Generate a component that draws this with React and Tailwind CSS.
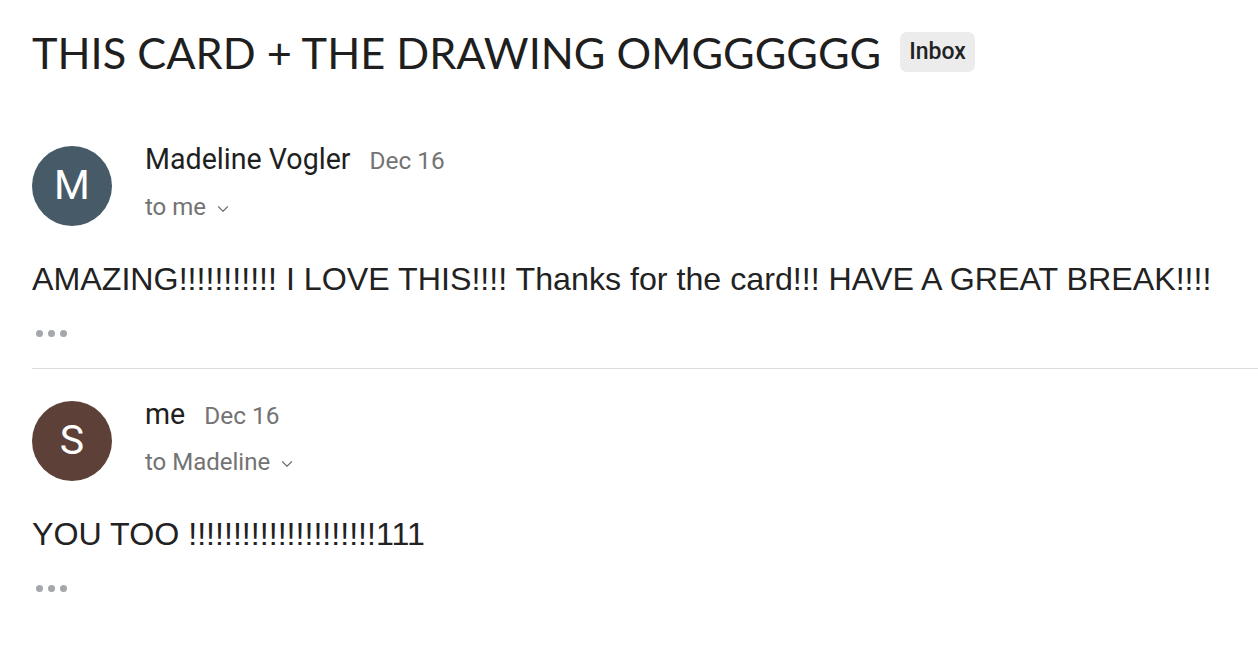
import React from 'react'
import { ChevronDown } from 'lucide-react'

const Dots = () => (
    <div className="flex items-center gap-[5px] pl-[4px] h-[7px]">
        <span className="w-[7px] h-[7px] rounded-full bg-[#a4a7ab]" />
        <span className="w-[7px] h-[7px] rounded-full bg-[#a4a7ab]" />
        <span className="w-[7px] h-[7px] rounded-full bg-[#a4a7ab]" />
    </div>
)

const Message = ({ initial, avatarColor, name, date, to, body }) => (
    <div>
        {/* Header */}
        <div className="flex items-start gap-[33px]">
            <div
                className={`w-[80px] h-[80px] shrink-0 rounded-full flex items-center justify-center text-white text-[41px] font-['Roboto',sans-serif] ${avatarColor}`}
            >
                {initial}
            </div>
            <div className="-mt-[3px] font-['Roboto',sans-serif]">
                <div className="flex items-baseline gap-[19px] leading-[32px]">
                    <span className="text-[28.6px] text-[#1f1f1f]">{name}</span>
                    <span className="text-[24.4px] text-[#737373]">{date}</span>
                </div>
                <div className="mt-[16px] flex items-center gap-[8px] leading-[28px] text-[24px] text-[#737373]">
                    <span>{to}</span>
                    <ChevronDown size={18} strokeWidth={1.6} className="mt-[3px]" />
                </div>
            </div>
        </div>

        {/* Body */}
        <p className="mt-[33px] text-[32.2px] leading-[40px] text-[#222] font-['Liberation_Sans',Arial,sans-serif] whitespace-nowrap">
            {body}
        </p>
        <div className="mt-[31px]">
            <Dots />
        </div>
    </div>
)

export default function App() {
    return (
        <div className="w-full h-[661px] overflow-hidden bg-white pl-[32px]">
            {/* Subject */}
            <div className="pt-[24px] flex items-center gap-[19px]">
                <h1 className="text-[43.3px] leading-[56px] text-[#1f1f1f] font-['Lato',sans-serif] whitespace-nowrap">
                    THIS CARD + THE DRAWING OMGGGGGG
                </h1>
                <span className="h-[40px] px-[9px] flex items-center rounded-[7px] bg-[#ececec] text-[23px] font-medium text-[#222] font-['Roboto',sans-serif]">
                    Inbox
                </span>
            </div>

            <div className="mt-[66px]">
                <Message
                    initial="M"
                    avatarColor="bg-[#465a67]"
                    name="Madeline Vogler"
                    date="Dec 16"
                    to="to me"
                    body="AMAZING!!!!!!!!!!! I LOVE THIS!!!! Thanks for the card!!! HAVE A GREAT BREAK!!!!"
                />
            </div>

            <div className="mt-[31px] h-px bg-[#dadce0]" />

            <div className="mt-[32px]">
                <Message
                    initial="S"
                    avatarColor="bg-[#5d4037]"
                    name="me"
                    date="Dec 16"
                    to="to Madeline"
                    body="YOU TOO !!!!!!!!!!!!!!!!!!!!!111"
                />
            </div>
        </div>
    )
}
